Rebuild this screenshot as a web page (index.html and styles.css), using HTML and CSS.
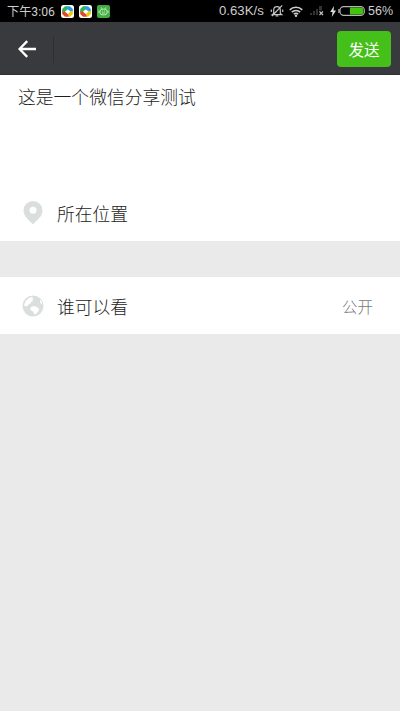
FILE: index.html
```html
<!DOCTYPE html>
<html lang="zh-CN">
<head>
<meta charset="utf-8">
<title>分享</title>
<link rel="stylesheet" href="styles.css">
</head>
<body>
<div class="status">
  <span class="time">下午3:06</span>
  <svg class="app" viewBox="0 0 13 13"><rect width="13" height="13" rx="2.500" fill="#fff"/><path d="M1.200 7V4L4 1.200h2.500v3L3.800 7z" fill="#36b449"/><path d="M5.500 1.200H9L11.800 4v2.500H9.500L6 3.800z" fill="#2d9ce0"/><path d="M11.800 6v3L9 11.800H6.500v-2L9.300 6.500z" fill="#f3c600"/><path d="M7.500 11.800H4L1.200 9V6.500h2.500l3.500 3z" fill="#e0462f"/></svg>
  <svg class="app" viewBox="0 0 13 13"><rect width="13" height="13" rx="2.500" fill="#fff"/><path d="M1.200 7V4L4 1.200h2.500v3L3.800 7z" fill="#36b449"/><path d="M5.500 1.200H9L11.800 4v2.500H9.500L6 3.800z" fill="#2d9ce0"/><path d="M11.800 6v3L9 11.800H6.500v-2L9.300 6.500z" fill="#f3c600"/><path d="M7.500 11.800H4L1.200 9V6.500h2.500l3.500 3z" fill="#e0462f"/></svg>
  <svg class="app" viewBox="0 0 13 13"><rect width="13" height="13" rx="2" fill="#43ad43"/><g fill="none" stroke="#c5efc1" stroke-width=".9"><rect x="3" y="4.200" width="7" height="5.600" rx="2.200"/><path d="M4.200 2.400l1 1.700M8.800 2.400l-1 1.700M2 5.500v2.600M11 5.500v2.600M5 6.200h.9M7.100 6.200H8M4.800 8h3.400"/></g></svg>
  <span class="speed">0.63K/s</span>
  <svg class="bell" viewBox="0 0 14 14" fill="none" stroke="#c4c4c4" stroke-width="1.200"><path d="M3.700 9.500V6a3.300 3.300 0 0 1 6.600 0v3.500l1.400 1.100H2.300zM5.700 12h2.600M12.200 1.400L2 12M1.300 5.500v2.500M12.700 5.500v2.500"/></svg>
  <svg class="wifi" viewBox="0 0 14 11"><g fill="none" stroke="#d0d0d0" stroke-width="1.500"><path d="M.7 3.900a9 9 0 0 1 12.600 0M2.800 6.100a6 6 0 0 1 8.400 0M4.800 8.200a3.100 3.100 0 0 1 4.400 0"/></g><circle cx="7" cy="9.700" r="1.200" fill="#d0d0d0"/></svg>
  <svg class="signal" viewBox="0 0 14 10"><path d="M0 7h2v2H0zM3 5h2v4H3zM6 3h2v6H6zM9 0h3v4.500H9z" fill="#333"/><path d="M9.500 5.500l3.500 3.500M13 5.500L9.500 9" stroke="#c8c8c8" stroke-width="1.100"/></svg>
  <svg class="bolt" viewBox="0 0 6 11"><path d="M4 0L.2 6h2.300L1.800 11 6 4.500H3.500z" fill="#ddd"/></svg>
  <svg class="battery" viewBox="0 0 27 10"><rect x="2" y=".6" width="24.400" height="8.800" rx="3.800" fill="none" stroke="#b5b5b5" stroke-width="1.100"/><path d="M1 3v4" stroke="#b5b5b5" stroke-width="1.400"/><path d="M12 1.600h10.800a2.600 2.600 0 0 1 2.600 2.600v1.600a2.600 2.600 0 0 1-2.600 2.600H12z" fill="#43c30f"/></svg>
  <span class="percent">56%</span>
</div>
<header class="nav">
  <svg class="back" viewBox="0 0 18 18" fill="none" stroke="#fff" stroke-width="2.300"><path d="M18 9H1.800M9.200 1.100L1.500 9l7.700 7.900"/></svg>
  <i class="divider"></i>
  <button class="send">发送</button>
</header>
<main>
  <section class="compose">
    <p class="message">这是一个微信分享测试</p>
    <div class="row">
      <svg class="icon" viewBox="0 0 22 24"><path fill="#dadedd" fill-rule="evenodd" d="M11 0a9.500 9.500 0 0 0-9.500 9.500C1.500 15.500 7 19 11 23.500 15 19 20.500 15.500 20.500 9.500A9.500 9.500 0 0 0 11 0zm0 5.700a3.500 3.500 0 1 1 0 7 3.500 3.500 0 0 1 0-7z"/></svg>
      <span>所在位置</span>
    </div>
  </section>
  <section class="row visibility">
    <svg class="icon" viewBox="0 0 22 24"><circle cx="11" cy="12" r="10.500" fill="#dadedd"/><path fill="#fff" d="M3.300 7.700C5 5 7.300 3.400 10 3l1.300 1.500-1 1.500.7 1.300-2 .7-.8 2-2 .5-.5 1.800-1.400-.3-1.500.5-.6-2zM9 13l3-1 3 1 2.300 2.300-1.500 3-3 2.400-1.500-3L8 15.500zM18 5.500l1.500 2 .8 2.500-1 .2-1.300-1.900z"/></svg>
    <span>谁可以看</span>
    <span class="value">公开</span>
  </section>
</main>
</body>
</html>
```
FILE: styles.css
```css
* { box-sizing: border-box; }
body {
  margin: 0;
  min-height: 711px;
  background: #eaeaea;
  color: #1c1c1c;
  font-family: Roboto, "Noto Sans CJK SC", sans-serif;
  font-weight: 300;
}
svg { display: block; flex: none; }
.status {
  display: flex;
  align-items: center;
  height: 22px;
  padding: 0 7px;
  background: #000;
  color: #cecece;
  font-size: 12px;
  font-weight: 400;
  line-height: 22px;
  white-space: nowrap;
}
.time { width: 54px; padding-top: 1px; font-size: 12.2px; }
.app { width: 13px; height: 13px; margin-right: 5px; }
.speed { margin-left: auto; width: 51px; font-family: "Liberation Sans", sans-serif; font-size: 13.2px; }
.bell { width: 14px; height: 14px; margin-right: 5px; }
.wifi { width: 14px; height: 11px; margin-right: 7px; }
.signal { width: 14px; height: 10px; margin-right: 6px; }
.bolt { width: 6px; height: 11px; margin-right: 2px; }
.battery { width: 27px; height: 10px; margin-right: 3px; }
.percent { width: 25px; font-family: "Liberation Sans", sans-serif; font-size: 12.5px; }
.nav {
  display: flex;
  align-items: center;
  height: 53px;
  padding: 2px 9px 0 18px;
  background: #393a3d;
  border-bottom: 1px solid #303134;
}
.back { width: 18px; height: 18px; }
.divider { width: 1px; height: 27px; margin-left: 17px; background: #2d2e31; }
.send {
  width: 54px;
  height: 36px;
  margin-left: auto;
  padding: 0;
  border: 0;
  border-radius: 4px;
  background: #45c01a;
  color: #fff;
  font: 400 15.5px/36px "Noto Sans CJK SC", sans-serif;
}
.compose { height: 166px; background: #fff; }
.message {
  height: 110px;
  margin: 0;
  padding: 10px 18px;
  font-size: 17.8px;
  line-height: 26px;
}
.row {
  display: flex;
  align-items: center;
  height: 56px;
  padding: 0 27px 1px 22px;
  font-size: 17.8px;
}
.icon { width: 22px; height: 24px; margin-right: 13px; }
.visibility { height: 57px; margin-top: 36px; padding-top: 1px; background: #fff; }
.value { margin-left: auto; color: #777; font-size: 15.5px; }
```
